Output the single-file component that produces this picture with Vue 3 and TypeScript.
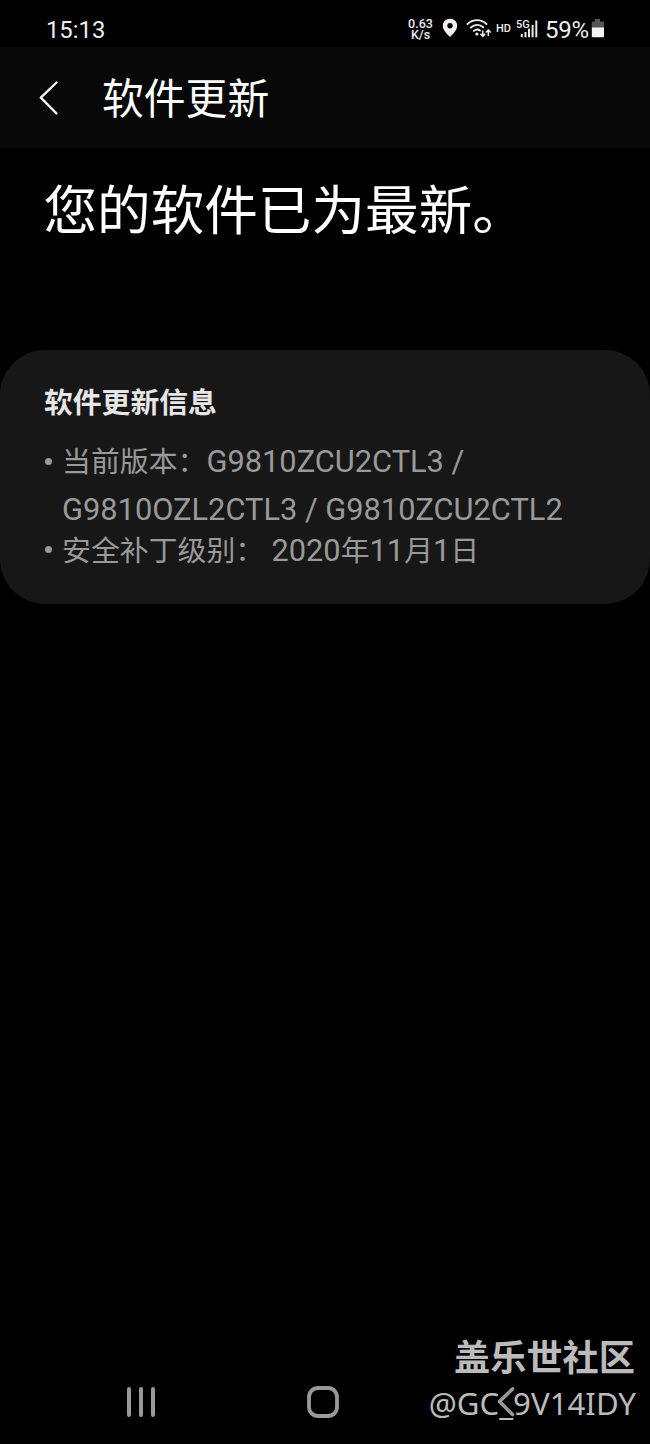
<script setup lang="ts">
const time = '15:13'
const battery = '59%'
const watermark = { name: '盖乐世社区', user: '@GC_9V14IDY' }
</script>

<template>
  <div class="screen">
    <header class="status">
      <span class="time">{{ time }}</span>
      <div class="speed"><span>0.63</span><span>K/s</span></div>
      <svg class="pin" width="16" height="20" viewBox="0 0 16 20">
        <path fill-rule="evenodd" d="M8 .8C3.900.8.8 3.900.8 7.800c0 4.700 5 8.900 7.200 11.200 2.200-2.300 7.200-6.500 7.200-11.200C15.200 3.900 12.100.8 8 .8ZM8 5a2.700 2.700 0 1 1 0 5.400A2.700 2.700 0 0 1 8 5Z" fill="#f0f0f0" />
      </svg>
      <svg class="wifi" width="26" height="20" viewBox="0 0 26 20">
        <g fill="none" stroke="#eee" stroke-width="1.900" stroke-linecap="round">
          <path d="M1.500 6C7 .8 15 .8 20.500 6" />
          <path d="M4.800 9.600C8.600 6 13.600 6 17.200 9.300" />
          <path d="M7.900 12.900c2-1.700 4.400-1.700 6.100-.3" />
        </g>
        <circle cx="10.900" cy="16" r="1.600" fill="#eee" />
        <g fill="none" stroke="#eee" stroke-width="1.500">
          <path d="M16.800 12.500V18M14.400 15.800l2.400 2.500 2.400-2.500" />
          <path d="M22.300 18v-5.500M19.900 14.600l2.400-2.500 2.400 2.500" />
        </g>
      </svg>
      <span class="hd">HD</span>
      <div class="signal">
        <svg width="22" height="20" viewBox="0 0 22 20">
          <path d="M5.800 16v3.300M9.500 14v5.300M13 10.800v8.500M16.600 7v12.300M20.300 2.400v16.900" stroke="#e8e8e8" stroke-width="2" />
        </svg>
        <span class="gen">5G</span>
      </div>
      <span class="percent">{{ battery }}</span>
      <svg class="cell" width="14" height="20" viewBox="0 0 14 20">
        <path d="M4 1h5v2.500h3q1 0 1 1V10H.8V4.500q0-1 1-1H4Z" fill="#555" />
        <path d="M.8 9.500H13v8.700q0 1-1 1H1.800q-1 0-1-1Z" fill="#f2f2f2" />
      </svg>
    </header>

    <div class="appbar">
      <svg class="back" width="22" height="38" viewBox="0 0 22 38">
        <path d="M18.500 3.500 2.800 18.600 18.500 34.500" fill="none" stroke="#f4f4f4" stroke-width="2.400" stroke-linecap="round" stroke-linejoin="round" />
      </svg>
      <h1>软件更新</h1>
    </div>

    <main>
      <p class="headline">您的软件已为最新。</p>
      <section class="card">
        <h2>软件更新信息</h2>
        <ul>
          <li><span class="first"><span class="cjk">当前版本：</span>G9810ZCU2CTL3 /</span><span class="second">G9810OZL2CTL3 / G9810ZCU2CTL2</span></li>
          <li class="patch"><span><span class="cjk">安全补丁级别： </span>2020<span class="cjk">年</span>11<span class="cjk">月</span>1<span class="cjk">日</span></span></li>
        </ul>
      </section>
    </main>

    <nav>
      <svg width="30" height="34" viewBox="0 0 30 34">
        <path d="M3 4v26M15 4v26M27 4v26" stroke="#999" stroke-width="4" stroke-linecap="round" />
      </svg>
      <svg width="34" height="34" viewBox="0 0 34 34">
        <rect x="3" y="3" width="28" height="28" rx="9" fill="none" stroke="#999" stroke-width="3.800" />
      </svg>
      <svg width="22" height="34" viewBox="0 0 22 34">
        <path d="M17.500 4 4.500 16.500 17.500 29.500" fill="none" stroke="#999" stroke-width="3.600" stroke-linecap="round" stroke-linejoin="round" />
      </svg>
    </nav>

    <div class="watermark">
      <strong>{{ watermark.name }}</strong>
      <span>{{ watermark.user }}</span>
    </div>
  </div>
</template>

<style>
body {
  margin: 0;
  background: #000;
}
</style>

<style scoped>
.screen {
  position: relative;
  display: flex;
  flex-direction: column;
  width: 650px;
  height: 1444px;
  overflow: hidden;
  background: #000;
  color: #fff;
  font-family: Roboto, 'Noto Sans CJK SC', sans-serif;
  white-space: nowrap;
}
h1, h2, p, ul {
  margin: 0;
  padding: 0;
  font-weight: 400;
}
.status {
  display: flex;
  align-items: flex-start;
  box-sizing: border-box;
  height: 47px;
  padding: 18px 0 0 45px;
  color: #eee;
}
.time {
  width: 363px;
  padding-left: 1px;
  box-sizing: border-box;
  font-size: 23.800px;
  line-height: 24px;
}
.speed {
  display: flex;
  flex-direction: column;
  align-items: center;
  width: 25px;
  font-size: 12.500px;
  font-weight: 500;
  line-height: 11px;
}
.pin { margin-left: 9px; }
.wifi { margin-left: 8px; }
.hd {
  width: 20px;
  margin-left: 4px;
  font-size: 11px;
  font-weight: 500;
  line-height: 21px;
}
.signal {
  position: relative;
  width: 22px;
  height: 20px;
}
.gen {
  position: absolute;
  top: 0;
  left: 0;
  font-size: 11px;
  font-weight: 500;
  line-height: 13px;
}
.percent {
  width: 46px;
  margin-left: 7px;
  font-size: 24px;
  letter-spacing: -0.3px;
  line-height: 24px;
}
.appbar {
  display: flex;
  align-items: center;
  height: 101px;
  padding-left: 38px;
  background: #080808;
}
h1 {
  margin-left: 42px;
  font-size: 41.800px;
  line-height: 50px;
  padding-top: 5px;
}
.headline {
  height: 160px;
  padding: 42px 0 0 43.500px;
  font-size: 53.600px;
  line-height: 44px;
}
main { flex: 1; }
.card {
  box-sizing: border-box;
  height: 254px;
  padding: 33px 44px 0;
  border-radius: 45px;
  background: #171717;
  color: #999;
  font-size: 30.800px;
}
h2 {
  color: #e6e6e6;
  font-size: 28.800px;
  font-weight: 700;
  line-height: 40px;
}
ul {
  margin-top: 15px;
  list-style: none;
}
li {
  display: grid;
  grid-template-columns: 18px 1fr;
  line-height: 47px;
}
li::before {
  content: '';
  width: 7px;
  height: 7px;
  margin: 20px 0 0 1px;
  border-radius: 50%;
  background: #999;
}
.cjk { font-size: 28.900px; }
.second { grid-column: 2; }
.patch { line-height: 35px; }
.patch::before { margin-top: 13px; }
nav {
  display: flex;
  box-sizing: border-box;
  height: 84px;
  padding: 25px 0 0 126px;
}
nav svg + svg { margin-left: 150px; }
nav svg:last-child { margin-left: 155px; }
.watermark {
  position: absolute;
  right: 14px;
  bottom: 19px;
  display: flex;
  flex-direction: column;
  align-items: flex-end;
  color: #bbb;
}
.watermark strong {
  margin-right: 1px;
  font-size: 36.200px;
  line-height: 44px;
}
.watermark span {
  font-family: 'Noto Sans', sans-serif;
  font-size: 31.200px;
  line-height: 44px;
}
</style>
